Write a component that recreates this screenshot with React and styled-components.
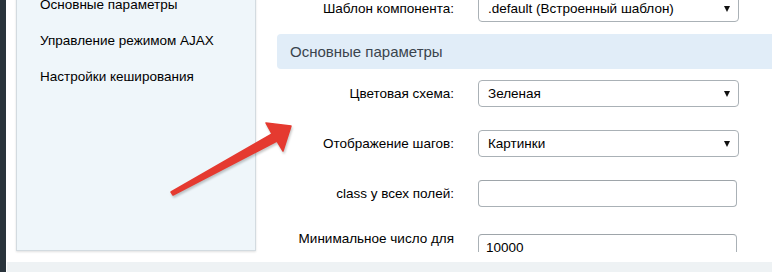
import React from "react";
import styled, { createGlobalStyle } from "styled-components";

const Global = createGlobalStyle`
  html, body {
    margin: 0;
    padding: 0;
    background: #fff;
    font-family: "Liberation Sans", Arial, sans-serif;
    overflow: hidden;
  }
`;

const Page = styled.div`
  position: relative;
  display: flex;
  width: 772px;
  height: 272px;
  overflow: hidden;
`;

const DarkBar = styled.div`
  width: 6px;
  flex: none;
  background: #29333b;
`;

const Main = styled.div`
  flex: 1;
  display: flex;
  flex-direction: column;
  min-width: 0;
`;

const Top = styled.div`
  height: 262px;
  box-sizing: border-box;
  display: flex;
  padding: 0 0 10px 10px;
`;

const Footer = styled.div`
  height: 10px;
  margin-left: 1px;
  background: #eef2f4;
`;

const Sidebar = styled.nav`
  width: 240px;
  flex: none;
  box-sizing: border-box;
  margin: -24px 0 1px 0;
  padding: 10px 0 0 23px;
  background: #eff6fa;
  border: 1px solid #d3dbe0;
  box-shadow: 0 1px 2px rgba(0, 0, 0, 0.12);
`;

const NavItem = styled.div`
  height: 36px;
  line-height: 36px;
  font-size: 13.5px;
  color: #000;
  white-space: nowrap;
`;

const Content = styled.div`
  flex: 1;
  margin-left: 21px;
  overflow: hidden;
  min-width: 0;
`;

const Form = styled.div`
  margin-top: -16px;
`;

const Row = styled.div`
  display: grid;
  grid-template-columns: 177px ${(p) => p.$w || 261}px;
  column-gap: 24px;
  align-items: center;
  padding: 11px 0 12px;
`;

const Label = styled.label`
  text-align: right;
  font-size: 13.5px;
  line-height: 17px;
  color: #000;
`;

const SectionHead = styled.div`
  height: 35px;
  line-height: 35px;
  padding-left: 13px;
  background: #e1edf8;
  border-radius: 4px 0 0 4px;
  font-size: 15px;
  color: #3a444d;
`;

const SelectWrap = styled.div`
  position: relative;
  height: 27px;
`;

const Select = styled.select`
  appearance: none;
  -webkit-appearance: none;
  width: 100%;
  height: 27px;
  box-sizing: border-box;
  border: 1px solid #aab1b6;
  border-radius: 4px;
  background: #fff;
  padding: 0 24px 0 9px;
  font-family: "Liberation Sans", Arial, sans-serif;
  font-size: 13.5px;
  color: #000;
  outline: none;
`;

const Caret = styled.span`
  position: absolute;
  right: 9px;
  top: 11px;
  width: 0;
  height: 0;
  border-left: 3.5px solid transparent;
  border-right: 3.5px solid transparent;
  border-top: 6px solid #111;
  pointer-events: none;
`;

const Input = styled.input`
  width: 100%;
  height: 27px;
  box-sizing: border-box;
  border: 1px solid #aab1b6;
  border-top-color: #9ea5aa;
  border-radius: 4px;
  background: #fff;
  padding: 0 7px;
  font-family: "Liberation Sans", Arial, sans-serif;
  font-size: 13.5px;
  color: #000;
  outline: none;
`;

const Arrow = styled.svg`
  position: absolute;
  left: 0;
  top: 0;
  pointer-events: none;
  filter: drop-shadow(1px 2px 1px rgba(0, 0, 0, 0.22));
`;

function Dropdown({ value }) {
  return (
    <SelectWrap>
      <Select defaultValue={value}>
        <option>{value}</option>
      </Select>
      <Caret />
    </SelectWrap>
  );
}

export default function App() {
  return (
    <>
      <Global />
      <Page>
        <DarkBar />
        <Main>
          <Top>
            <Sidebar>
              <NavItem>Основные параметры</NavItem>
              <NavItem>Управление режимом AJAX</NavItem>
              <NavItem>Настройки кеширования</NavItem>
            </Sidebar>
            <Content>
              <Form>
                <Row>
                  <Label>Шаблон компонента:</Label>
                  <Dropdown value=".default (Встроенный шаблон)" />
                </Row>
                <SectionHead>Основные параметры</SectionHead>
                <Row>
                  <Label>Цветовая схема:</Label>
                  <Dropdown value="Зеленая" />
                </Row>
                <Row>
                  <Label>Отображение шагов:</Label>
                  <Dropdown value="Картинки" />
                </Row>
                <Row $w={259}>
                  <Label>class у всех полей:</Label>
                  <Input defaultValue="" />
                </Row>
                <Row $w={259}>
                  <Label>Минимальное число для показа поиска:</Label>
                  <Input defaultValue="10000" />
                </Row>
              </Form>
            </Content>
          </Top>
          <Footer />
        </Main>
        <Arrow width="772" height="272" viewBox="0 0 772 272">
          <polygon
            points="171,192 272,134 266,123 291,126 283,151 277,141 173,195"
            fill="#e53a30"
            stroke="#e53a30"
            strokeWidth="1.5"
            strokeLinejoin="round"
          />
        </Arrow>
      </Page>
    </>
  );
}
